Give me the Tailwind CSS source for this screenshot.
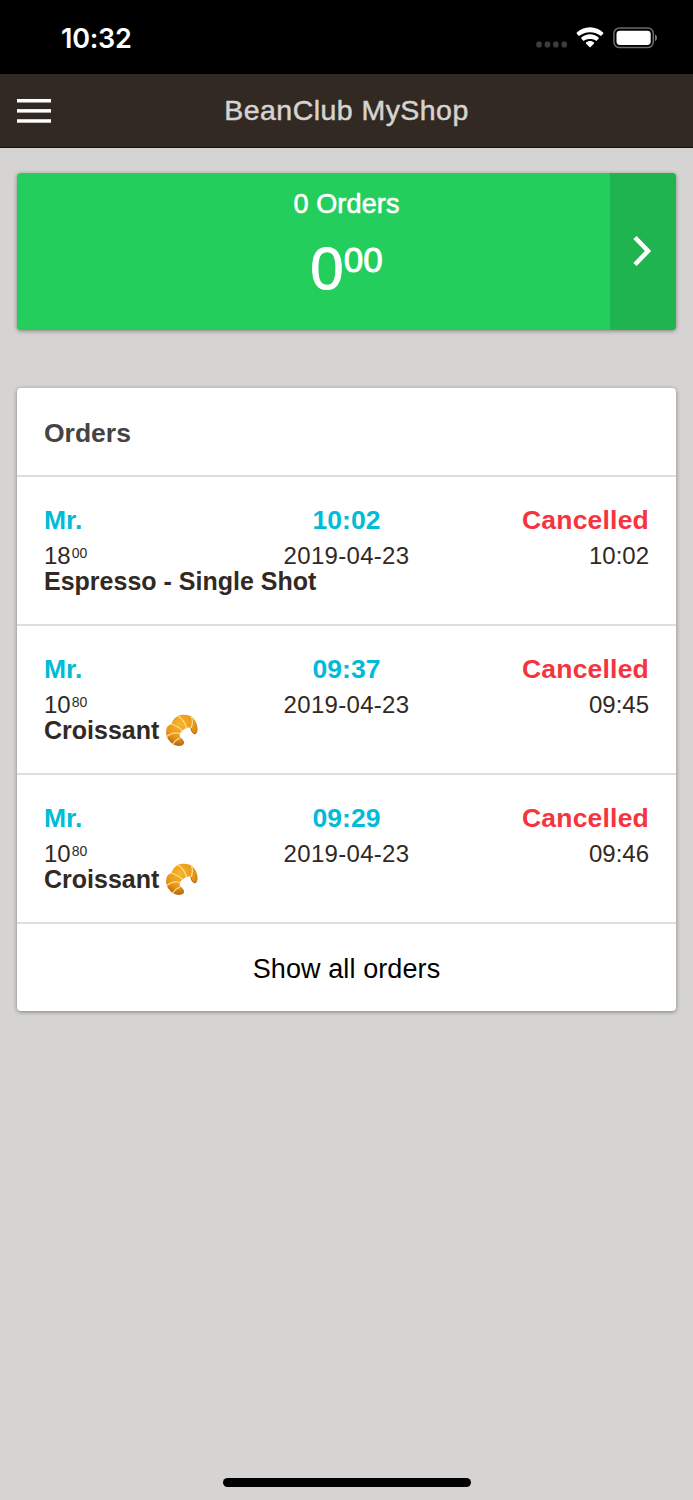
<!DOCTYPE html>
<html lang="en">
<head>
    <meta charset="UTF-8">
    <meta name="viewport" content="width=device-width, initial-scale=1.0">
    <title>BeanClub MyShop</title>
    <script src="https://cdn.jsdelivr.net/npm/@tailwindcss/browser@4"></script>
</head>
<body class="bg-[#d5d4d2] font-['Liberation_Sans',sans-serif] text-[#322923]">
    <div class="flex flex-col w-full h-[1500px]">
        <!-- Status bar -->
        <div class="flex items-center justify-between h-[74px] bg-black pl-[60px] pr-9 shrink-0">
            <span class="font-['Inter',sans-serif] font-semibold text-[27px] leading-8 text-white tracking-[-0.25px] mt-[3px] ml-px">10:32</span>
            <div class="flex items-center mt-0.5">
                <svg width="32" height="7" viewBox="0 0 32 7" class="mt-3 mr-[9px]" fill="#3d3d3d">
                    <rect x="0.3" y="0.4" width="5.500" height="6" rx="2" />
                    <rect x="8.7" y="0.4" width="5.500" height="6" rx="2" />
                    <rect x="17.1" y="0.4" width="5.500" height="6" rx="2" />
                    <rect x="25.5" y="0.4" width="5.500" height="6" rx="2" />
                </svg>
                <svg width="28" height="21" viewBox="0 0 28 21" class="mr-[9px] -ml-px -mt-px" fill="#fff">
                    <path d="M14 .3C19.3.3 24 2.400 27.400 5.700L27.400 6.600L25 9C21.900 6.500 18.100 5.200 14 5.200S6.100 6.500 3 9L.6 6.600L.6 5.700C4 2.400 8.700.3 14 .3Z" />
                    <path d="M14 7.200C17.400 7.200 20.400 8.500 22.800 10.700L22.800 11.500L20.400 13.900C18.600 12.500 16.400 11.900 14 11.900S9.400 12.500 7.600 13.900L5.200 11.500L5.200 10.700C7.600 8.500 10.600 7.200 14 7.200Z" />
                    <path d="M14 14C15.600 14 17 14.600 18.100 15.500L18.100 16.400L14 20.400L9.900 16.400L9.900 15.500C11 14.600 12.400 14 14 14Z" />
                </svg>
                <svg width="44" height="22" viewBox="0 0 44 22">
                    <rect x="0.900" y="1" width="39.400" height="19.600" rx="5.600" fill="none" stroke="#6b6b6b" stroke-width="1.500" />
                    <rect x="3.500" y="3.700" width="34.200" height="14.200" rx="3.400" fill="#fff" />
                    <path d="M42 7.400C43.400 8 44 9.300 44 10.800S43.400 13.600 42 14.200Z" fill="#7b7b7b" />
                </svg>
            </div>
        </div>

        <!-- Header -->
        <header class="grid grid-cols-[1fr_auto_1fr] items-center h-[74px] bg-[#322923] border-b border-[#14100d] px-[17px] shrink-0">
            <svg width="34" height="24" viewBox="0 0 34 24" fill="#fff">
                <rect width="34" height="3.500" />
                <rect y="10.100" width="34" height="3.500" />
                <rect y="20.200" width="34" height="3.500" />
            </svg>
            <h1 class="-mt-0.5 text-[28.5px] leading-8 tracking-[0.45px] text-[#d5d4d2] [-webkit-text-stroke:0.5px_#d5d4d2]">BeanClub MyShop</h1>
        </header>

        <main class="px-[17px] pt-[25px]">
            <!-- Totals -->
            <section class="relative h-[157px] bg-[#23ce5c] rounded-[4px] overflow-hidden text-center text-white shadow-[0_1px_4px_rgba(0,0,0,0.4)]">
                <p class="pt-4 text-[27px] leading-[30px] tracking-[0.15px] [-webkit-text-stroke:0.6px_#fff]">0 Orders</p>
                <div class="flex justify-center mt-[17px] [-webkit-text-stroke:0.9px_#fff]">
                    <span class="text-[60px] leading-[66px]">0</span>
                    <span class="text-[35px] leading-[48px]">00</span>
                </div>
                <a class="absolute right-0 top-0 flex items-center justify-center w-[66px] h-full bg-[#1fb450]">
                    <svg width="20" height="32" viewBox="0 0 20 32" class="mr-[3px] -mt-[2px]" fill="none" stroke="#fff" stroke-width="4.600">
                        <path d="M3 2.500L16 16L3 29.500" />
                    </svg>
                </a>
            </section>

            <!-- Orders -->
            <section class="mt-[58px] bg-white rounded-[4px] shadow-[0_1px_4px_rgba(0,0,0,0.4)]">
                <h2 class="h-[87px] px-[27px] pt-[30px] text-[26.5px] leading-[30px] font-bold text-[#444]">Orders</h2>
                <div id="orders"></div>
                <a class="block h-[89px] pt-[30px] border-t-2 border-[#dedede] text-center text-[27px] leading-[30px] tracking-[0.1px] text-black">Show all orders</a>
            </section>
        </main>

        <div class="mt-auto mb-[13px] mx-auto w-[248px] h-[9px] rounded-full bg-black shrink-0"></div>
    </div>

    <template id="croissant"><svg width="34" height="33" viewBox="0 0 34 33" class="inline-block ml-[6px] -my-2 align-middle relative -top-0.5">
            <defs>
                <radialGradient id="crust" cx="0.450" cy="0.300" r="0.750">
                    <stop offset="0" stop-color="#f8b62f" />
                    <stop offset="0.600" stop-color="#e99517" />
                    <stop offset="1" stop-color="#a85d10" />
                </radialGradient>
            </defs>
            <path d="M13 2C17 0 24 0 28 4C32 8 34 16 31.500 19C29.500 21 26.500 19 26 14C24 12.500 20.500 14 17.500 16.500C14.500 18.500 14 22 15.500 24C17.500 26 19.500 28 18 30.500C16 33 10 32 7 29.500C2.500 26 .5 21 1.300 16C2 12 4 11 6.500 10C7.500 6 10 3.500 13 2Z" fill="url(#crust)" />
            <path d="M6.500 10C10.500 11.500 14.500 13.500 17.500 16.500M13 2C17 4.500 20 8.500 21.500 13.700M1.800 22.500C5.500 19.500 10 18 14.700 19.500M26.500 3C28 6.500 27.500 10.500 26 14M8 30C9.500 27 12 25 15.500 24" fill="none" stroke="#ffdc85" stroke-width="1.300" stroke-linecap="round" />
            <path d="M15.500 24C17.500 26 19.500 28 18 30.500M31.500 19C29.500 21 26.500 19 26 14" fill="none" stroke="#a35712" stroke-width="0.900" />
        </svg></template>

    <script>
        const orders = [
            { name: 'Mr.', time: '10:02', date: '2019-04-23', closed: '10:02', price: ['18', '00'], item: 'Espresso - Single Shot' },
            { name: 'Mr.', time: '09:37', date: '2019-04-23', closed: '09:45', price: ['10', '80'], item: 'Croissant', croissant: true },
            { name: 'Mr.', time: '09:29', date: '2019-04-23', closed: '09:46', price: ['10', '80'], item: 'Croissant', croissant: true },
        ];
        const icon = document.getElementById('croissant').innerHTML;

        document.getElementById('orders').innerHTML = orders.map(order => `
            <article class="h-[149px] px-[27px] pt-[28px] border-t-2 border-[#dedede]">
                <div class="grid grid-cols-3 text-[26.5px] leading-[30px] font-bold text-[#00bcd7]">
                    <span>${order.name}</span>
                    <span class="text-center">${order.time}</span>
                    <span class="text-right text-[#f53440] tracking-[0.2px]">Cancelled</span>
                </div>
                <div class="grid grid-cols-3 mt-[7px] text-[24px] leading-[28px]">
                    <span class="flex">${order.price[0]}<span class="ml-px text-[14px] leading-[22px]">${order.price[1]}</span></span>
                    <span class="text-center tracking-[0.3px]">${order.date}</span>
                    <span class="text-right">${order.closed}</span>
                </div>
                <p class="-mt-[3px] text-[25px] leading-[28px] font-bold whitespace-nowrap">${order.item}${order.croissant ? icon : ''}</p>
            </article>
        `).join('');
    </script>
</body>
</html>
